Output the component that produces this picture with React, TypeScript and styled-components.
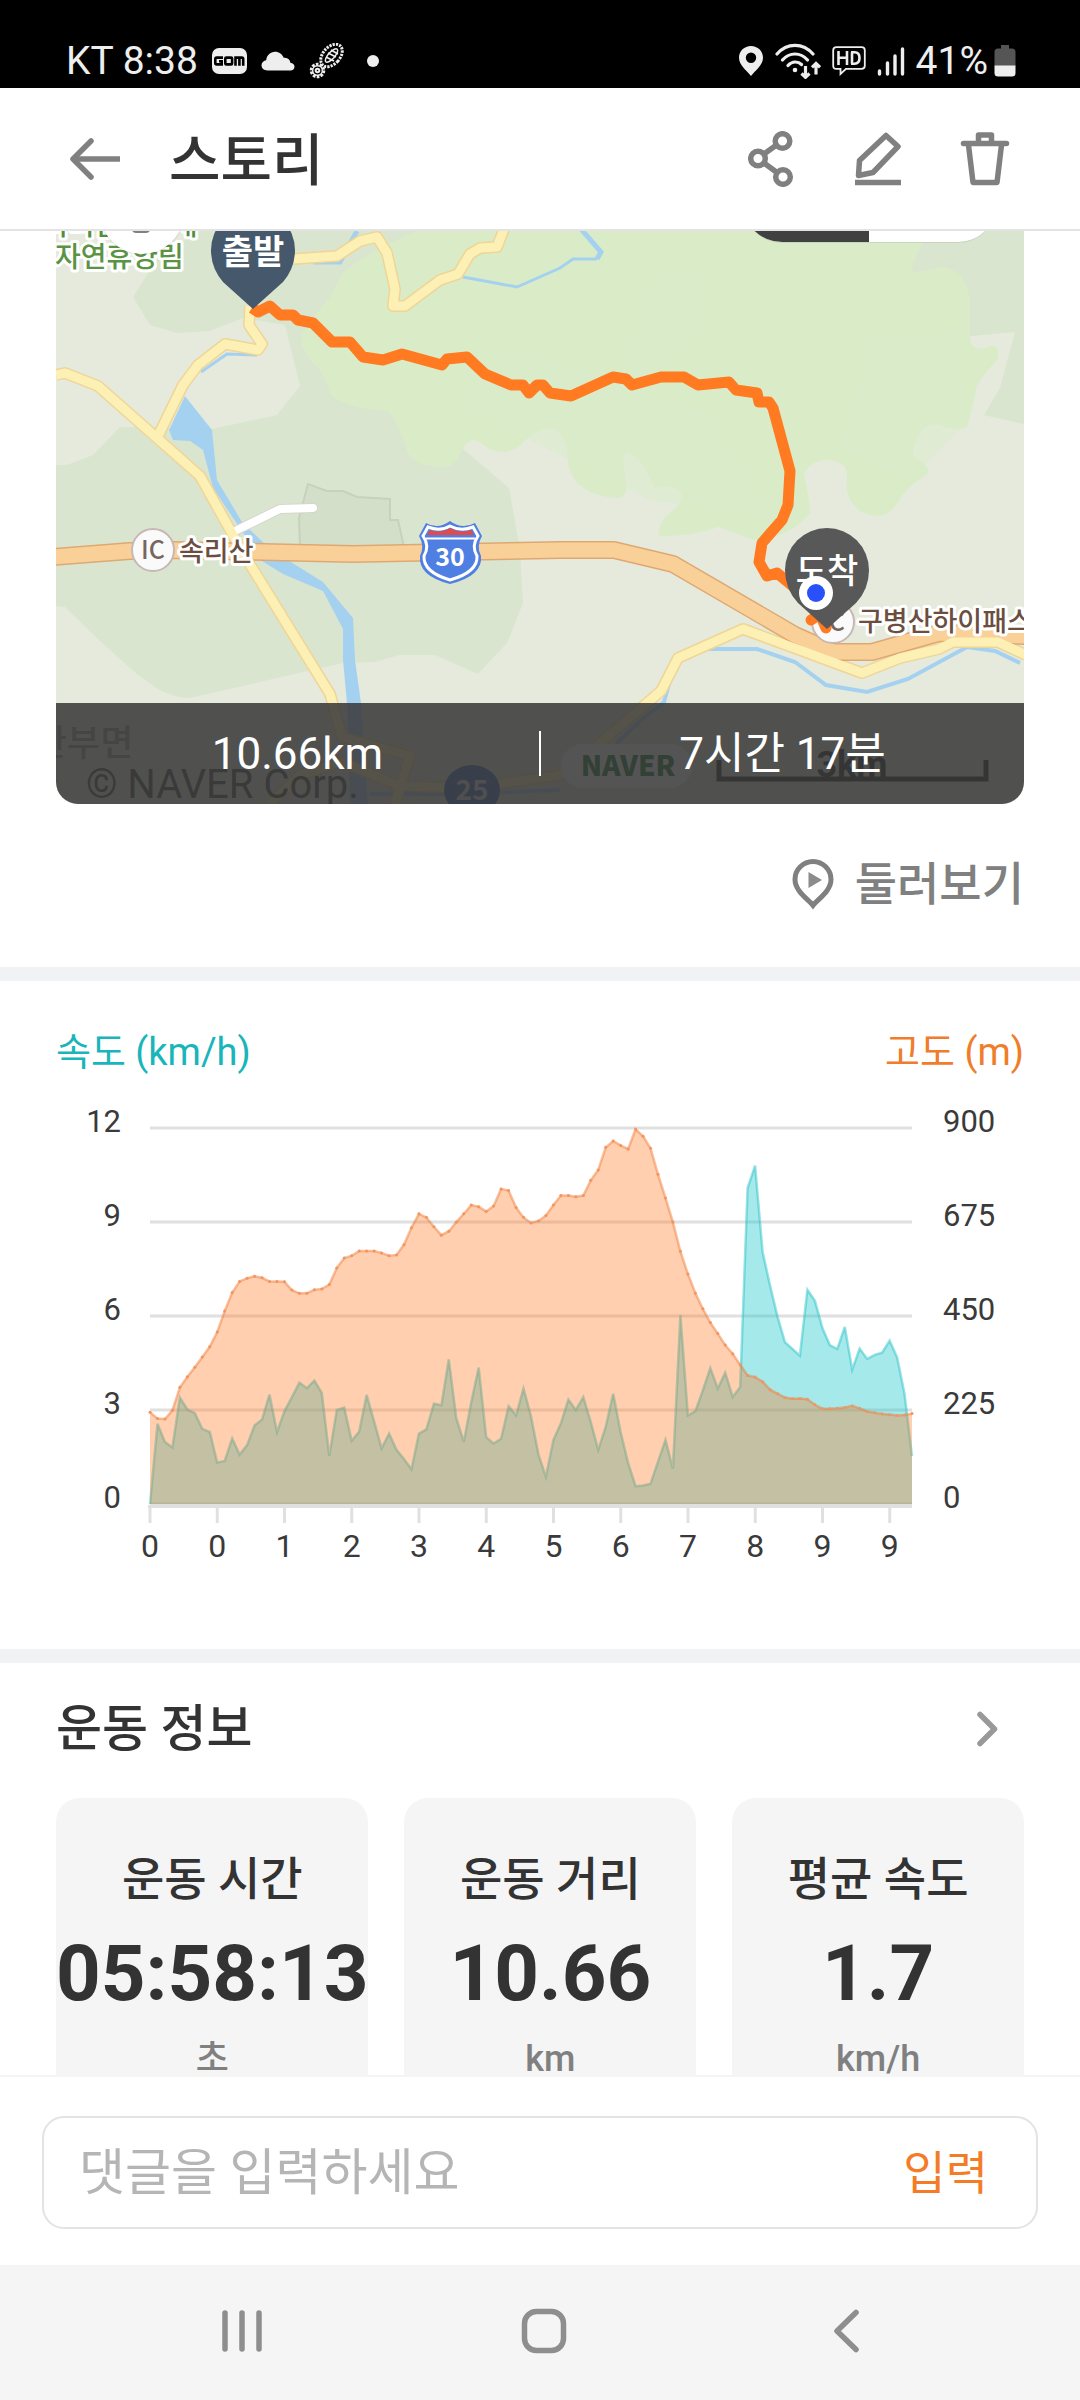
import React from "react";
import styled, { createGlobalStyle } from "styled-components";

const KR = `"Noto Sans CJK KR", sans-serif`;
const LATIN = `Roboto, "Noto Sans CJK KR", sans-serif`;

const GlobalStyle = createGlobalStyle`
  *, *::before, *::after { box-sizing: border-box; }
  body { margin: 0; background: #fff; color: #333; font-family: ${LATIN}; }
  button, input { font: inherit; color: inherit; border: 0; padding: 0; background: none; }
  h1, h2, h3, p, dl, dt, dd { margin: 0; }
  svg { display: block; flex: none; }
`;

const Screen = styled.div`
  display: flex;
  flex-direction: column;
  height: 100vh;
  overflow: hidden;
  background: #fff;
`;

const StatusBar = styled.div`
  flex: none;
  display: flex;
  align-items: center;
  justify-content: space-between;
  height: 88px;
  padding: 34px 64px 0 66px;
  background: #000;
  color: #eee;
  font-size: 39px;
  line-height: 54px;
`;

const StatusGroup = styled.div<{ $gap: number }>`
  display: flex;
  align-items: center;
  gap: ${(p) => p.$gap}px;
`;

const StatusDot = styled.span`
  width: 12px;
  height: 12px;
  margin-left: 8px;
  border-radius: 50%;
  background: #eee;
`;

const AppBar = styled.header`
  flex: none;
  display: flex;
  align-items: center;
  height: 143px;
  padding: 0 63px 0 55px;
  border-bottom: 2px solid #e3e3e3;
`;

const Title = styled.h1`
  flex: 1;
  margin-left: 34px;
  padding-top: 4px;
  font-size: 56px;
  line-height: 72px;
  font-weight: 500;
`;

const IconButton = styled.button<{ $size: number }>`
  display: grid;
  place-items: center;
  width: ${(p) => p.$size}px;
  height: ${(p) => p.$size}px;
  cursor: pointer;
`;

const Actions = styled.div`
  display: flex;
  gap: 43px;
`;

const Content = styled.main`
  flex: 1;
  min-height: 0;
  overflow-y: auto;
  scrollbar-width: none;
`;

const MapSection = styled.section`
  padding: 0 56px;
`;

const MapCard = styled.div`
  position: relative;
  overflow: hidden;
  border-radius: 0 0 22px 22px;
`;

const MapDrawing = styled.svg`
  width: 100%;
  height: auto;
`;

const MapSummary = styled.div`
  position: absolute;
  inset: auto 0 0 0;
  display: flex;
  align-items: center;
  height: 101px;
  background: rgba(54, 54, 54, 0.85);
  color: #fff;
  font-size: 44px;
  line-height: 64px;
`;

const SummaryItem = styled.span`
  flex: 1;
  text-align: center;
`;

const SummaryDivider = styled.span`
  width: 2px;
  height: 45px;
  background: #fff;
`;

const ExploreRow = styled.div`
  display: flex;
  justify-content: flex-end;
  padding: 50px 0 53px;
`;

const ExploreButton = styled.button`
  display: flex;
  align-items: center;
  gap: 20px;
  color: #808080;
  font-size: 46px;
  font-weight: 500;
  line-height: 60px;
  cursor: pointer;
`;

const Divider = styled.hr`
  height: 14px;
  margin: 0;
  border: 0;
  background: #f0f2f4;
`;

const ChartSection = styled.section`
  padding: 45px 56px 71px;
`;

const ChartLegend = styled.div`
  display: flex;
  justify-content: space-between;
  font-size: 38px;
  line-height: 52px;
`;

const LegendItem = styled.span<{ $color: string }>`
  color: ${(p) => p.$color};
`;

const ChartDrawing = styled.svg`
  width: 100%;
  height: auto;
`;

const InfoSection = styled.section`
  padding: 36px 56px 60px;
`;

const InfoHeader = styled.div`
  display: flex;
  align-items: center;
  justify-content: space-between;
  padding-right: 5px;
  margin-bottom: 39px;
`;

const InfoTitle = styled.h2`
  font-size: 50px;
  font-weight: 500;
  line-height: 60px;
`;

const Cards = styled.dl`
  display: flex;
  gap: 36px;
`;

const Card = styled.div`
  flex: 1 1 0;
  display: flex;
  flex-direction: column;
  align-items: center;
  gap: 21px;
  padding: 51px 0;
  border-radius: 24px;
  background: #f5f5f5;
`;

const CardLabel = styled.dt`
  font-size: 46px;
  font-weight: 500;
  line-height: 60px;
`;

const CardValue = styled.dd`
  font-size: 78px;
  font-weight: 700;
  line-height: 88px;
`;

const CardUnit = styled.dd`
  color: #808080;
  font-size: 36px;
  font-weight: 500;
  line-height: 40px;
`;

const CommentBar = styled.form`
  flex: none;
  padding: 39px 42px 36px;
  border-top: 2px solid #f5f5f5;
`;

const CommentBox = styled.div`
  display: flex;
  align-items: center;
  height: 113px;
  padding: 0 48px 0 35px;
  border: 2px solid #e3e3e3;
  border-radius: 22px;
`;

const CommentInput = styled.input`
  flex: 1;
  min-width: 0;
  font-size: 50px;
  line-height: 72px;
  outline: 0;
  &::placeholder {
    color: #b5b5b5;
    opacity: 1;
  }
`;

const SubmitButton = styled.button`
  color: #f57c26;
  font-size: 46px;
  line-height: 72px;
  cursor: pointer;
`;

const NavBar = styled.nav`
  flex: none;
  display: grid;
  grid-template-columns: repeat(3, 1fr);
  height: 135px;
  padding: 0 83px 4px 91px;
  background: #f5f5f5;
`;

const NavButton = styled.button`
  display: grid;
  place-items: center;
  cursor: pointer;
`;

/* ---------- status bar icons ---------- */

const GomIcon = () => (
  <svg width="35" height="26" viewBox="0 0 35 26">
    <rect width="35" height="26" rx="7" fill="#eee" />
    <g fill="none" stroke="#000" strokeWidth="2.6">
      <path d="M11 9.6H4.6Q3.3 9.6 3.3 11v4Q3.3 16.4 4.6 16.4H9.700V13.300H7" />
      <rect x="13.300" y="9.600" width="6.800" height="6.800" rx="1" />
      <path d="M23.500 17.700V9.600h6.400q1.300 0 1.300 1.400v6.700M27.400 9.600v8.100" />
    </g>
  </svg>
);

const CloudIcon = () => (
  <svg width="34" height="20" viewBox="0 0 34 20" fill="#eee">
    <path d="M6.500 19.500C2.800 19.500.5 17.200.5 14.300c0-2.700 2-4.800 4.700-5.100C5.600 4.300 9.300.7 14 .7c4.100 0 7.400 2.500 8.700 6.100 4-.6 6.300 1.800 6.700 5 2.400.3 4.100 1.800 4.100 3.900s-1.700 3.800-4.200 3.800z" />
  </svg>
);

const BootIcon = () => (
  <svg width="36" height="36" viewBox="0 0 36 36" fill="none" stroke="#eee">
    <ellipse cx="22.500" cy="12.500" rx="8.500" ry="13" transform="rotate(42 22.500 12.500)" strokeWidth="3" strokeDasharray="2.200 1.100" />
    <ellipse cx="22.500" cy="12.500" rx="3.200" ry="8.500" transform="rotate(42 22.500 12.500)" strokeWidth="1.500" />
    <path d="M17 14l8 4M19 10l8 4M22 7l7 4" strokeWidth="1.600" />
    <circle cx="8.500" cy="27.500" r="6.300" strokeWidth="3" strokeDasharray="2.600 1.300" />
    <circle cx="8.500" cy="27.500" r="4.800" strokeWidth="1.400" />
    <circle cx="8.500" cy="27.500" r="1.800" strokeWidth="2" />
  </svg>
);

const LocationIcon = () => (
  <svg width="26" height="32" viewBox="0 0 26 32" fill="#eee">
    <path fillRule="evenodd" d="M13 1C6.400 1 1 6 1 12.600 1 20 8 25 13 31c5-6 12-11 12-18.400C25 6 19.600 1 13 1zm0 6.500a5.200 5.200 0 1 1 0 10.400 5.200 5.200 0 0 1 0-10.400z" />
  </svg>
);

const WifiIcon = () => (
  <svg width="46" height="36" viewBox="0 0 46 36" fill="none" stroke="#eee" strokeWidth="3.200" strokeLinecap="round">
    <path d="M2 11c10-11.500 26-11.500 36 0M7.500 17c7-8 18-8 25 0M13 22.500c4-4.500 10-4.500 13.500-1" />
    <circle cx="20" cy="27" r="2.300" fill="#eee" stroke="none" />
    <path d="M30.500 23v11M26.500 30.500l4 3.800 4-3.800M41 31.500v-11M37 24.300l4-3.800 4 3.800" strokeLinecap="butt" />
  </svg>
);

const HdIcon = () => (
  <svg width="34" height="30" viewBox="0 0 34 30" fill="none" stroke="#eee">
    <path d="M4.500 1.200h25q3.300 0 3.300 3v15.600q0 3-3.300 3H14L8.500 28v-5.200h-4q-3.300 0-3.300-3V4.200q0-3 3.300-3z" strokeWidth="1.800" />
    <path d="M6.500 5v14M15 5v14M6.500 11.800H15M20 6.300v11.400M19 6.300h3.500q5 0 5 5.700t-5 5.700H19" strokeWidth="2.600" />
  </svg>
);

const SignalIcon = () => (
  <svg width="28" height="32" viewBox="0 0 28 32" stroke="#eee" strokeWidth="3.400" strokeLinecap="round">
    <path d="M2.500 26v3M10.500 18v11M18 11v18M25.500 4v25" />
  </svg>
);

const BatteryIcon = () => (
  <svg width="22" height="32" viewBox="0 0 22 32">
    <path d="M7 0h8v3.500h3q3.500 0 3.500 3.500v14H.5V7Q.5 3.500 4 3.500h3z" fill="#555" />
    <path d="M.5 20.500h21V28q0 3.500-3.500 3.500H4Q.5 31.500.5 28z" fill="#eee" />
  </svg>
);

/* ---------- app icons ---------- */

const ArrowIcon = () => (
  <svg width="52" height="44" viewBox="0 0 52 44" fill="none" stroke="#808080" strokeWidth="5.500" strokeLinejoin="round">
    <path d="M22 4L4 22l18 18" strokeLinecap="round" />
    <path d="M4 22h47" />
  </svg>
);

const ShareIcon = () => (
  <svg width="46" height="56" viewBox="0 0 46 56" fill="none" stroke="#808080" strokeWidth="5.500">
    <circle cx="34.500" cy="10" r="7.300" />
    <circle cx="10" cy="27.500" r="7.300" />
    <circle cx="35" cy="46" r="7.300" />
    <path d="M16 23l12.500-9M16 32l13 9.500" />
  </svg>
);

const EditIcon = () => (
  <svg width="48" height="56" viewBox="0 0 48 56" fill="none" stroke="#808080" strokeWidth="5.500">
    <path d="M4.500 44.500L5.500 29.500 32 4.500 44 15.500 19 41.500z" strokeLinejoin="round" />
    <path d="M1 51.500h46" />
  </svg>
);

const TrashIcon = () => (
  <svg width="50" height="54" viewBox="0 0 50 54" fill="none" stroke="#808080" strokeWidth="5.500">
    <path d="M18.500 10.500V3h13v7.500" strokeLinejoin="round" />
    <path d="M3.500 11.500h43" strokeLinecap="round" />
    <path d="M8.500 13l4.500 37.500h24L41.500 13" strokeLinejoin="round" />
  </svg>
);

const ExploreIcon = () => (
  <svg width="44" height="52" viewBox="0 0 44 52">
    <path d="M22 47.500C17 41 4 33 4 21.500a18 18 0 0 1 36 0C40 33 27 41 22 47.500z" fill="none" stroke="#808080" strokeWidth="5" />
    <path d="M17.500 14l13.500 8-13.500 8z" fill="#8a8d8c" />
  </svg>
);

const ChevronIcon = () => (
  <svg width="44" height="44" viewBox="0 0 44 44" fill="none" stroke="#999" strokeWidth="5.500" strokeLinecap="round" strokeLinejoin="round">
    <path d="M5 7.500L19.500 22 5 36.500" />
  </svg>
);

const RecentsIcon = () => (
  <svg width="44" height="44" viewBox="0 0 44 44" stroke="#8e8e8e" strokeWidth="5.500" strokeLinecap="round">
    <path d="M5 4v36M22 4v36M39 4v36" />
  </svg>
);

const HomeIcon = () => (
  <svg width="46" height="46" viewBox="0 0 46 46" fill="none" stroke="#8e8e8e" strokeWidth="5.500">
    <rect x="3.500" y="3.500" width="39" height="39" rx="12" />
  </svg>
);

const BackIcon = () => (
  <svg width="30" height="44" viewBox="0 0 30 44" fill="none" stroke="#8e8e8e" strokeWidth="5.500" strokeLinecap="round" strokeLinejoin="round">
    <path d="M25 3.500L6 22l19 18.500" />
  </svg>
);

/* ---------- map ---------- */

const YELLOW_ROADS = [
  "56,375 65,373 98,386 157,438 200,476 243,553 330,694 342,737 410,756 395,804",
  "157,438 183,385 198,365 225,344 258,350 262,344 249,325 250,306",
  "285,259 293,259 337,256 360,241 377,237 387,253 395,289 393,306 405,306 440,280 458,274 470,254 480,248 497,247 504,229",
  "270,804 300,775 342,762 400,786 470,788 540,778 561,775 599,744 661,691 678,658 743,629 862,673 900,658 939,649 953,642 998,642 1026,655",
];
const HIGHWAY =
  "54,557 130,551 173,550 307,553 353,554 560,550 614,550 673,564 795,635 833,652 872,652 939,633 1026,636";
const TRACK =
  "252,308 258,312 270,306 280,315 293,315 298,320 313,323 332,342 350,342 363,357 383,360 402,354 442,365 447,359 467,357 485,374 511,385 523,385 529,393 537,385 543,385 550,393 571,396 613,377 626,379 632,385 661,377 684,377 698,385 729,382 736,390 757,393 759,402 769,402 773,408 790,471 788,505 782,520 762,543 759,562 767,576 777,573 800,592";

const Outlined = ({ x, y, size, fill, children }: { x: number; y: number; size: number; fill: string; children: string }) => (
  <text x={x} y={y} fontSize={size} fill={fill} fontWeight="500" stroke="#fff" strokeWidth="6" strokeLinejoin="round" paintOrder="stroke">
    {children}
  </text>
);

const RouteMap = () => (
  <MapDrawing viewBox="56 231 968 573" fontFamily={KR} role="img" aria-label="이동 경로 지도">
    <rect x="56" y="231" width="968" height="573" fill="#e5eadc" />
    <path
      fill="#dae5cf"
      d="M200 231L160 255 150 270 133 297 150 325 177 333 210 331 243 318 285 325 300 386 277 415 212 429 120 427 93 455 67 465H56V606L65 607 100 641 138 675 158 689Q175 698 190 698L343 663 375 662 400 655H435L478 674 507 643 523 603 520 549 509 488 462 448 470 300 430 231zM922 231H1024V424L984 415 1000 388 1015 332 960 337 900 266z"
    />
    <path
      fill="#d9ecc7"
      d="M417 231Q370 250 342 274L330 297 303 331Q297 345 312 362Q325 372 330 394Q345 408 387 411Q398 420 407 450Q412 467 445 467Q455 467 462 450Q470 436 480 442Q500 460 520 446Q535 427 554 429Q568 436 568 465Q575 495 617 498Q632 498 624 470Q620 450 632 454Q646 464 654 488Q672 483 680 492Q688 500 664 518Q657 530 659 536Q690 537 719 527Q740 535 754 540Q790 538 810 513Q809 495 804 473Q812 460 829 460Q847 462 847 475Q844 500 860 511Q885 524 898 502Q907 486 925 476Q935 469 915 458Q909 450 922 430Q930 424 939 425Q965 433 968 425L975 395Q976 380 998 360Q1000 344 990 346Q974 354 970 340V300Q965 268 940 267Q925 272 915 272Q910 270 912 266L922 243V231z"
    />
    <path fill="#dbebcb" d="M660 274H700Q715 290 700 330L640 380 620 360zM870 340L960 330 968 420 910 480 840 450zM450 400L520 350 700 410 780 520 650 500z" opacity=".6" />
    <path d="M300 545L299 518 308 484 327 491H343L357 497 390 499V520H398L404 547" fill="#d4dfc9" stroke="#c6d3ba" strokeWidth="2" />

    <g fill="none" stroke="#a5d1f1" strokeWidth="4">
      <path d="M313 262H340L357 231M597 259L601 252 581 229" strokeWidth="5" />
      <path d="M463 277L517 287 560 268 573 259H597M201 372L227 354 257 355" strokeWidth="3" />
      <path d="M705 649H757L795 662 826 685 867 692 908 679 967 647 995 651 1020 663M670 680L664 702 640 721 616 744M370 794H460L560 790" />
    </g>
    <path fill="#a5d1f1" d="M185 396L212 430 217 480 242 522 270 549 323 582 353 618 355 660 361 703 368 804H350L347 703 343 660V629L323 591 283 574 262 561 213 488 203 450 190 441 173 440 169 430z" />

    <g fill="none" strokeLinejoin="round">
      {YELLOW_ROADS.map((d) => (
        <polyline key={d} points={d} stroke="#efd597" strokeWidth="12" />
      ))}
      <polyline points="237,530 280,509 313,508" stroke="#d5d5d0" strokeWidth="10" strokeLinecap="round" />
      <polyline points="237,530 280,509 313,508" stroke="#fff" strokeWidth="8" strokeLinecap="round" />
      <polyline points={HIGHWAY} stroke="#dfa872" strokeWidth="18" />
      <polyline points={HIGHWAY} stroke="#f9d198" strokeWidth="15" />
      {YELLOW_ROADS.map((d) => (
        <polyline key={d} points={d} stroke="#fdf0b4" strokeWidth="9" />
      ))}
    </g>

    <Outlined x={43} y={235} size={28} fill="#4f8f3a">속리산말티재</Outlined>
    <Outlined x={55} y={267} size={28} fill="#5b9344">자연휴양림</Outlined>

    <circle cx="153" cy="550" r="21" fill="#fbfafa" stroke="#c5b8b5" strokeWidth="2" />
    <text x="153" y="559" fontSize="25" fontWeight="500" fill="#77665f" textAnchor="middle">IC</text>
    <Outlined x={179} y={561} size={27} fill="#6b4e3f">속리산</Outlined>

    <circle cx="833" cy="622" r="21" fill="#fbfafa" stroke="#c5b8b5" strokeWidth="2" />
    <text x="833" y="631" fontSize="25" fontWeight="500" fill="#77665f" textAnchor="middle">IC</text>
    <Outlined x={858} y={631} size={27} fill="#6b4e3f">구병산하이패스</Outlined>

    <path d="M426 523Q438 530 450 521Q462 530 475 523L482 536Q476 546 481 556Q483 576 450 584Q418 576 420 556Q425 546 419 536z" fill="#4f7fe3" />
    <path d="M428 527Q440 532 450 526Q461 532 473 527L478 536Q471 546 477 556Q478 572 450 580Q423 572 424 556Q430 546 423 536z" fill="#4f7fe3" stroke="#fff" strokeWidth="3" />
    <path d="M427 535L430 530Q441 534 450 528Q460 534 471 530L474 535z" fill="#e24b4b" />
    <path d="M426 538.500H475" stroke="#fff" strokeWidth="2" />
    <text x="450" y="566" fontSize="25" fontWeight="700" fill="#fff" textAnchor="middle">30</text>

    <polyline points={TRACK} fill="none" stroke="#ff7a20" strokeWidth="11" strokeLinejoin="round" />
    <path d="M811 620L820 614 826 628" fill="none" stroke="#ff7a20" strokeWidth="11" strokeLinecap="round" strokeLinejoin="round" />

    <path d="M253 309L223 282Q211 268 211 250A42 42 0 0 1 295 250Q295 268 283 282z" fill="#46586b" />
    <text x="253" y="264" fontSize="34" fontWeight="700" fill="#fff" textAnchor="middle">출발</text>

    <path d="M827 629L798 603Q785 589 785 570A42 42 0 0 1 869 570Q869 589 856 603z" fill="#585858" />
    <text x="827" y="583" fontSize="34" fontWeight="500" fill="#fff" textAnchor="middle">도착</text>
    <circle cx="816" cy="593" r="17" fill="#fff" />
    <circle cx="816" cy="593" r="9" fill="#2951fb" />

    <circle cx="142" cy="212" r="43" fill="#000" opacity=".08" />
    <circle cx="142" cy="212" r="42" fill="#fff" />
    <rect x="132" y="222" width="18" height="11" rx="4" fill="#808080" />
    <rect x="743" y="164" width="254" height="79" rx="39" fill="#000" opacity=".08" />
    <rect x="743" y="163" width="254" height="79" rx="39" fill="#fff" />
    <path d="M869 163H782A39 39 0 0 0 782 242H869z" fill="#404040" />

    <text x="34" y="756" fontSize="36" fontWeight="500" fill="#999">산부면</text>
    <ellipse cx="472" cy="790" rx="28" ry="25" fill="#4a6cc0" />
    <text x="472" y="800" fontSize="28" fontWeight="700" fill="#ddd" textAnchor="middle">25</text>
    <text x="86" y="798" fontSize="40" fill="#555" fontFamily={LATIN}>© NAVER Corp.</text>
    <rect x="561" y="744" width="131" height="44" rx="22" fill="#fff" />
    <text x="628" y="776" fontSize="28" fontWeight="900" fill="#1c7a36" textAnchor="middle">NAVER</text>
    <path d="M719 760V779H986V760" fill="none" stroke="#333" strokeWidth="5" />
    <text x="852" y="777" fontSize="36" fontWeight="700" fill="#333" textAnchor="middle" fontFamily={LATIN}>3km</text>
  </MapDrawing>
);

/* ---------- chart ---------- */

const RANGE = 951;
const ALTITUDE = [
  232, 216, 215, 237, 295, 322, 346, 372, 398, 435, 488, 535, 563, 571, 576, 572, 563, 563, 562, 541, 533, 533, 542, 544,
  555, 597, 622, 628, 640, 640, 640, 635, 628, 630, 656, 699, 734, 725, 701, 680, 690, 713, 734, 756, 752, 740, 754, 797,
  793, 750, 725, 711, 716, 730, 756, 780, 780, 777, 780, 819, 845, 902, 918, 907, 898, 948, 930, 900, 834, 774, 713, 639,
  582, 533, 494, 459, 431, 402, 380, 352, 325, 321, 309, 289, 279, 269, 266, 267, 265, 251, 241, 241, 242, 244, 248, 242,
  234, 231, 228, 226, 224, 225, 229,
];
const SPEED = [
  0, 203, 157, 143, 269, 239, 230, 190, 182, 105, 109, 166, 125, 149, 199, 214, 277, 182, 235, 270, 307, 293, 312, 281,
  122, 238, 244, 160, 183, 276, 209, 141, 178, 137, 114, 88, 178, 189, 254, 250, 366, 217, 157, 257, 345, 169, 153, 165,
  247, 224, 292, 222, 125, 69, 162, 204, 264, 238, 270, 207, 137, 195, 279, 182, 104, 45, 47, 51, 107, 162, 89, 478, 224,
  235, 287, 344, 292, 332, 271, 296, 799, 856, 637, 552, 474, 409, 392, 375, 542, 514, 445, 402, 392, 448, 340, 393, 367,
  377, 383, 413, 371, 279, 121,
];
const PLOT = { left: 150, right: 912, top: 1128, bottom: 1504 };

const toPoints = (values: number[]) =>
  values.map((v, i) => [
    PLOT.left + (i * (PLOT.right - PLOT.left)) / (values.length - 1),
    PLOT.bottom - (v / RANGE) * (PLOT.bottom - PLOT.top),
  ]);
const toLine = (pts: number[][]) => pts.map(([x, y]) => `${x.toFixed(1)},${y.toFixed(1)}`).join(" ");
const toArea = (pts: number[][]) => `${PLOT.left},${PLOT.bottom} ${toLine(pts)} ${PLOT.right},${PLOT.bottom}`;

const altitude = toPoints(ALTITUDE);
const speed = toPoints(SPEED);
const ROWS = [
  ["12", "900"],
  ["9", "675"],
  ["6", "450"],
  ["3", "225"],
  ["0", "0"],
];
const TICKS = ["0", "0", "1", "2", "3", "4", "5", "6", "7", "8", "9", "9"];

const SpeedChart = () => (
  <ChartDrawing viewBox="56 1078 968 500" fontFamily={LATIN} fontSize="31" fill="#3a3a3a" role="img" aria-label="속도와 고도 그래프">
    {ROWS.map(([left, right], i) => {
      const y = PLOT.top + i * 94;
      return (
        <g key={left}>
          <path d={`M${PLOT.left} ${y}H${PLOT.right}`} stroke="#e0e0e0" strokeWidth="3" />
          <text x="121" y={y + 4} textAnchor="end">{left}</text>
          <text x="943" y={y + 4}>{right}</text>
        </g>
      );
    })}
    <polygon points={toArea(speed)} fill="rgba(30, 200, 205, 0.4)" />
    <polyline points={toLine(speed)} fill="none" stroke="rgba(30, 190, 195, 0.45)" strokeWidth="2.500" />
    <polygon points={toArea(altitude)} fill="rgba(255, 118, 29, 0.35)" />
    <polyline points={toLine(altitude)} fill="none" stroke="rgba(240, 120, 50, 0.45)" strokeWidth="2.500" />
    {altitude.map(([x, y]) => (
      <circle key={x} cx={x} cy={y} r="1.500" fill="#f2955f" />
    ))}
    <path d="M148 1506.500H912" stroke="#e0e0e0" strokeWidth="3" />
    {TICKS.map((t, i) => {
      const x = PLOT.left + i * 67.250;
      return (
        <g key={i}>
          <path d={`M${x} 1508V1523`} stroke="#e0e0e0" strokeWidth="3" />
          <text x={x} y="1557" textAnchor="middle" fontSize="32">{t}</text>
        </g>
      );
    })}
  </ChartDrawing>
);

const STATS = [
  { label: "운동 시간", value: "05:58:13", unit: "초" },
  { label: "운동 거리", value: "10.66", unit: "km" },
  { label: "평균 속도", value: "1.7", unit: "km/h" },
];

export default function App() {
  return (
    <Screen>
      <GlobalStyle />
      <StatusBar>
        <StatusGroup $gap={14}>
          <span>KT 8:38</span>
          <GomIcon />
          <CloudIcon />
          <BootIcon />
          <StatusDot />
        </StatusGroup>
        <StatusGroup $gap={11}>
          <LocationIcon />
          <WifiIcon />
          <HdIcon />
          <SignalIcon />
          <StatusGroup $gap={6}>
            <span>41%</span>
            <BatteryIcon />
          </StatusGroup>
        </StatusGroup>
      </StatusBar>

      <AppBar>
        <IconButton $size={80} type="button" aria-label="뒤로">
          <ArrowIcon />
        </IconButton>
        <Title>스토리</Title>
        <Actions>
          <IconButton $size={64} type="button" aria-label="공유"><ShareIcon /></IconButton>
          <IconButton $size={64} type="button" aria-label="편집"><EditIcon /></IconButton>
          <IconButton $size={64} type="button" aria-label="삭제"><TrashIcon /></IconButton>
        </Actions>
      </AppBar>

      <Content>
        <MapSection>
          <MapCard>
            <RouteMap />
            <MapSummary>
              <SummaryItem>10.66km</SummaryItem>
              <SummaryDivider />
              <SummaryItem>7시간 17분</SummaryItem>
            </MapSummary>
          </MapCard>
          <ExploreRow>
            <ExploreButton type="button">
              <ExploreIcon />
              둘러보기
            </ExploreButton>
          </ExploreRow>
        </MapSection>
        <Divider />
        <ChartSection>
          <ChartLegend>
            <LegendItem $color="#19b5ba">속도 (km/h)</LegendItem>
            <LegendItem $color="#f07d2b">고도 (m)</LegendItem>
          </ChartLegend>
          <SpeedChart />
        </ChartSection>
        <Divider />
        <InfoSection>
          <InfoHeader>
            <InfoTitle>운동 정보</InfoTitle>
            <IconButton $size={44} type="button" aria-label="운동 정보 더보기">
              <ChevronIcon />
            </IconButton>
          </InfoHeader>
          <Cards>
            {STATS.map((s) => (
              <Card key={s.label}>
                <CardLabel>{s.label}</CardLabel>
                <CardValue>{s.value}</CardValue>
                <CardUnit>{s.unit}</CardUnit>
              </Card>
            ))}
          </Cards>
        </InfoSection>
      </Content>

      <CommentBar onSubmit={(e) => e.preventDefault()}>
        <CommentBox>
          <CommentInput type="text" aria-label="댓글" placeholder="댓글을 입력하세요" />
          <SubmitButton type="submit">입력</SubmitButton>
        </CommentBox>
      </CommentBar>

      <NavBar aria-label="시스템 탐색">
        <NavButton type="button" aria-label="최근 앱"><RecentsIcon /></NavButton>
        <NavButton type="button" aria-label="홈"><HomeIcon /></NavButton>
        <NavButton type="button" aria-label="뒤로 가기"><BackIcon /></NavButton>
      </NavBar>
    </Screen>
  );
}
